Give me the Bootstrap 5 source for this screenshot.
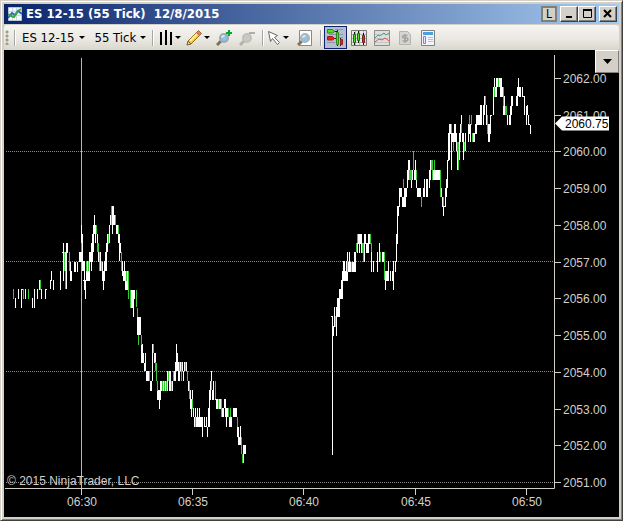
<!DOCTYPE html>
<html lang="en">
<head>
<meta charset="utf-8">
<meta name="viewport" content="width=device-width, initial-scale=1">
<title>ES 12-15 (55 Tick) 12/8/2015</title>
<link href="https://cdn.jsdelivr.net/npm/bootstrap@5.3.0/dist/css/bootstrap.min.css" rel="stylesheet">
<style>
body { background: #d4d0c8; font-family: "DejaVu Sans Condensed", "DejaVu Sans", sans-serif; }
.win { background: #d4d0c8; padding: 3px; border: 1px solid; border-color: #d4d0c8 #404040 #404040 #d4d0c8;
  box-shadow: inset 1px 1px #fff, inset -1px -1px #808080; }
.titlebar { height: 21px; background: linear-gradient(90deg, #0a246a, #a6caf0); padding: 0 2px 1px 4px; border-bottom: 1px solid #d4d0c8; }
.titlebar h1 { font-size: 13px; line-height: 20px; font-weight: 700; color: #fff; white-space: pre; margin-left: 4px; }
.capbtn { width: 18px; height: 16px; padding: 0; border: 1px solid; border-color: #fff #404040 #404040 #fff; background: #d4d0c8;
  box-shadow: inset -1px -1px #808080; line-height: 0; display: flex; justify-content: center; align-items: center; }
.capbtn.link-mark { width: 16px; border: 2px solid #808078; box-shadow: none; font-size: 12px; color: #000; }
.capgap { gap: 3px; }
.tools { min-height: 25px; background: linear-gradient(#f6f5f2, #e9e7e1 60%, #d9d6cc); border-radius: 3px; }
.tools-row { background: #d4d0c8; }
.grip { width: 10px; height: 15px; background: radial-gradient(circle at 3px 2px, #a09c90 1px, transparent 2px) 0 0/10px 4px; }
.rule { width: 2px; height: 16px; background: #a6a6a6; border-right: 1px solid #fff; }
.tool { height: 23px; width: 23px; padding: 0; border: 1px solid transparent; background: none; display: flex; align-items: center; justify-content: center; color: #000; }
.tool.menu { width: 29px; gap: 2px; }
.tool.text { width: auto; font-size: 13px; gap: 4px; padding: 0 4px 0 5px; white-space: nowrap; }
.tool.text.interval { padding-left: 3px; }
.tool.picked { border-color: #0a246a; background: #b6bdd2; margin-left: 2px; }
.plot { display: block; width: 100%; height: auto; }
.plot text { font-family: "Liberation Sans", Arial, sans-serif; font-size: 12px; fill: #d4d0c8; }
.plot .last { fill: #000; }
.drop { top: 0; right: 0; width: 24px; height: 23px; padding: 0; background: #d4d0c8; border: 1px solid; border-color: #fff #808080 #808080 #fff; display: flex; align-items: center; justify-content: center; }
</style>
</head>
<body>
<main class="win">
  <header class="titlebar d-flex align-items-center">
    <svg width="14" height="14" viewBox="0 0 14 14" aria-hidden="true"><path fill="#f4f8ff" stroke="#b8c4d8" d="M.5 .5h13v13H.5z"/><path stroke="#cbd5e4" d="M4.500 1v12M8.500 1v12M1 4.500h12M1 8.500h12"/><path fill="none" stroke="#2e62c0" stroke-width="2" d="M0 11l4-5 3 2 3-4 4 3"/><path fill="none" stroke="#39a83c" stroke-width="2" d="M0 7l3 2 3 1 4-6 3-2"/></svg>
    <h1 class="mb-0 flex-grow-1">ES 12-15 (55 Tick)  12/8/2015</h1>
    <div class="d-flex capgap">
      <button class="capbtn link-mark" type="button">L</button>
      <div class="d-flex">
        <button class="capbtn" type="button" aria-label="Minimize"><svg width="11" height="10"><path d="M2 7h6v2H2z"/></svg></button>
        <button class="capbtn" type="button" aria-label="Maximize"><svg width="11" height="10"><path fill="none" stroke="#000" d="M1.500 1v7.500h8V1"/><path d="M1 0h9v2H1z"/></svg></button>
      </div>
      <button class="capbtn" type="button" aria-label="Close"><svg width="10" height="9"><path stroke="#000" stroke-width="2" d="M1 1l7 7M8 1L1 8"/></svg></button>
    </div>
  </header>
  <div class="tools-row">
  <div class="tools d-flex align-items-center" role="toolbar" aria-label="Chart tools">
    <span class="grip"></span><span class="rule"></span>
    <button class="tool text" type="button">ES 12-15 <svg width="7" height="4"><path d="M0 0h6L3 3z"/></svg></button>
    <button class="tool text interval" type="button">55 Tick <svg width="7" height="4"><path d="M0 0h6L3 3z"/></svg></button>
    <span class="rule"></span>
    <button class="tool menu" type="button" aria-label="Bar style"><svg width="15" height="16"><path stroke="#000" stroke-width="2" d="M4 2v13M9 0v15M14 2v13"/></svg><svg width="7" height="4"><path d="M1 0h6L4 3z"/></svg></button>
    <button class="tool menu" type="button" aria-label="Draw"><svg width="16" height="16"><path fill="#f4c936" stroke="#96701b" d="M2 11L11 2l3 3-9 9z"/><path stroke="#fff09a" stroke-width="2" d="M4 11l7-7"/><path fill="#e9825c" stroke="#a65f42" d="M10.500 2.500l2-2 3 3-2 2z"/><path fill="#ead8b5" stroke="#705a3a" d="M2 11l3 3-4 1z"/></svg><svg width="6" height="4"><path d="M0 0h6L3 3z"/></svg></button>
    <button class="tool" type="button" aria-label="Zoom in"><svg width="16" height="16"><path stroke="#806f5c" stroke-width="3" d="M1 15l4-4"/><circle cx="8" cy="8" r="4" fill="#8dc2ea" stroke="#a1a7ae" stroke-width="2"/><path fill="#d7edfb" d="M5 7a3 3 0 013-2l1 1-3 2z"/><path stroke="#00a82c" stroke-width="2" d="M13 0v6M10 3h6"/></svg></button>
    <button class="tool" type="button" aria-label="Zoom out" disabled><svg width="16" height="16"><path stroke="#b5b2ad" stroke-width="3" d="M1 15l4-4"/><circle cx="8" cy="8" r="4" fill="#c9c9c7" stroke="#c0bfbb" stroke-width="2"/><path stroke="#b0aeaa" stroke-width="2" d="M10 3h6"/></svg></button>
    <span class="rule ms-1"></span>
    <button class="tool menu" type="button" aria-label="Pointer"><svg width="14" height="16"><path fill="#fff" stroke="#666" d="M1.500 1.500l2 10 2-3 5 6 2-2-5-5 3-2z"/></svg><svg width="7" height="4"><path d="M0 0h6L3 3z"/></svg></button>
    <button class="tool" type="button" aria-label="Zoom page"><svg width="16" height="16"><path fill="#fff" stroke="#898989" d="M2.500.5h12v15h-12z"/><path stroke="#85715e" stroke-width="3" d="M1 15l4-4"/><circle cx="8" cy="8" r="4" fill="#8fc2e6" stroke="#aeb3b8" stroke-width="2"/><path fill="#d7edfb" d="M5 7a3 3 0 013-2l1 1-3 2z"/></svg></button>
    <span class="rule ms-1"></span>
    <button class="tool picked" type="button" aria-label="Chart trader" aria-pressed="true"><svg width="17" height="17"><path stroke="#8e96ab" d="M8 .5h8M2 5.500h14M0 13.500h8M12 8.500h4"/><path stroke="#222" d="M6 2.500h5M6 9.500h5M10.500 1v16M13.500 9v8"/><path fill="#4be51b" stroke="#2a8a1a" d="M.5.500h5l2 2-2 1.500h-5zM9.500 3.500h2v12h-2z"/><path fill="#ef1b16" stroke="#9c2020" d="M.5 7.500h5l2 2-2 1.500h-5zM13.500 10.500h2v5h-2z"/></svg></button>
    <button class="tool" type="button" aria-label="Chart"><svg width="16" height="16"><path fill="#e8e8e8" stroke="#777" d="M.5.500h15v15H.5z"/><path stroke="#b8b8b8" d="M1 4.500h14M1 8.500h14M1 12.500h14M4.500 1v14M8.500 1v14M12.500 1v14"/><path stroke="#111" d="M3.500 2v13M7.500 1v12M12.500 3v12"/><path fill="#45d51f" stroke="#236b1b" d="M2.500 4.500h2v8h-2zM6.500 3.500h2v7h-2z"/><path fill="#e92720" stroke="#7c2020" d="M11.500 5.500h2v7h-2z"/></svg></button>
    <button class="tool" type="button" aria-label="Indicators"><svg width="16" height="16"><path fill="#dedede" stroke="#8c8c8c" d="M.5.500h15v15H.5z"/><path stroke="#c5c5c5" d="M1 4.500h14M1 8.500h14M1 12.500h14"/><path fill="none" stroke="#3aa781" d="M1 8l3-3 2 1 4-3 2 2 3-2"/><path fill="none" stroke="#d85650" d="M1 12l4-3 3 1 3-2 4 3"/></svg></button>
    <button class="tool" type="button" aria-label="Strategies" disabled><svg width="14" height="16"><path fill="#d6d5d2" stroke="#b4b3b0" d="M1.500 1.500h8l3 3v10h-11z"/><path fill="none" stroke="#a2a2a0" stroke-width="1.500" d="M9.500 5.500H6C4 5.500 4 8 6 8h2c2.500 0 2.500 3 0 3H4.500M7 4v9"/></svg></button>
    <button class="tool" type="button" aria-label="Properties"><svg width="14" height="16"><path fill="#f2f3fb" stroke="#818181" d="M.5.500h13v15H.5z"/><path fill="#4ba1db" d="M2 2h10v3H2z"/><path fill="#eee4ff" stroke="#9673dd" d="M2.500 6.500h2v7h-2z"/><path stroke="#b7c1d4" d="M7 7.500h5M7 9.500h5M7 11.500h5"/></svg></button>
  </div>
  </div>
  <section class="position-relative" aria-label="Price chart">
    <svg class="plot" viewBox="4 50 615 467" role="img" aria-label="ES 12-15, 55 tick bars">
      <path fill="#000" d="M4 50h615v467H4z"/>
      <path stroke="#8c8c8c" stroke-dasharray="1 1" d="M6 151.500h548M6 261.500h548M6 371.500h548M6 482.500h548"/>
      <path stroke="#d2b48c" d="M81.500 58v430"/>
      <g id="bars" shape-rendering="crispEdges"></g>
      <path fill="none" stroke="#d4d0c8" d="M5 488.500h549.500V55"/>
      <g id="labels"></g>
      <text x="7" y="485">© 2015 NinjaTrader, LLC</text>
      <path fill="#fff" d="M555 123.500l7-7h47v14h-47z"/>
      <text class="last" x="565" y="128">2060.75</text>
    </svg>
    <button class="drop position-absolute" type="button" aria-label="Chart menu"><svg width="9" height="5"><path d="M0 0h9L4.500 5z"/></svg></button>
  </section>
</main>
<script>
// Each bar: x, top, bottom, optional width
const up = `15 298 308|18 289 299|21 289 308|22 289 290|25 289 299|32 298 308|34 289 308|37 289 299|39 280 290|41 289 299|45 289 299 1|46 289 290|50 280 289|51 271 281|53 280 290|60 271 290|62 252 253|63 243 281|65 252 271|66 243 289|67 243 253|70 262 281|71 271 281|74 262 272 2|77 262 272|79 252 262 2|81 225 262|82 234 271|83 261 271 2|84 271 290|83 280 281|85 280 299|86 271 281 4|87 261 281|89 252 271|90 252 262|91 243 271|92 234 262|93 225 252|94 215 234|95 225 243|97 234 243|98 252 262|100 252 271|102 262 281|103 271 290|104 261 281|105 252 271|106 243 271|107 234 252|109 225 243|110 215 225|112 206 234|113 206 225|114 215 225|116 225 234 2|118 234 243 2|119 234 261|120 243 253|122 261 276|123 271 281 3|124 261 271|125 271 290 3|127 271 290
131 290 308 2|133 290 317|134 290 299|137 317 335 2|139 317 335 2|141 344 363 2|143 353 363|144 363 371|145 353 371|146 371 381 2|148 371 381|150 381 391 2|152 344 381|154 353 363|155 353 363|157 390 400 3|159 390 409|160 381 400|161 381 391|163 381 391|165 381 391|167 371 391|169 371 391 2|172 381 391|174 371 381|175 362 381|176 344 371|177 353 371|178 362 381|179 371 381|180 362 371|182 362 371|183 371 381|184 362 371|186 362 371|188 381 391|190 390 409|191 399 417|192 390 409|193 408 417|194 417 427|195 408 417|196 417 427 6|197 408 427|199 408 427|202 417 437|204 417 427|205 426 427|206 417 427|207 427 437|208 408 427|209 390 427|210 381 400|211 371 381|212 390 400|213 381 400|215 399 400|216 399 409 2|219 399 409 2|222 408 417 2|224 399 408|225 399 417|226 408 427|227 408 417|229 417 427 2|231 417 427|233 408 417 4|237 427 437|238 427 445|239 437 445|240 426 445|243 445 463|244 445 454 2
331 316 317|332 316 455|333 326 336|334 307 327|336 307 336|337 298 317 3|339 289 299 3|341 280 299 2|342 271 281 6|343 261 281 2|346 261 281|347 252 261|348 262 272 3|349 252 262|352 262 272 4|354 252 272|355 252 262|356 243 244|358 234 244 4|357 243 253|359 243 253|361 243 253|364 234 262|365 234 244|366 243 253 2|368 234 253|369 234 244|371 243 272|373 261 272|376 261 262|377 252 272|379 243 262|382 252 262 2|385 271 290|386 271 281 3|388 261 281|390 271 281|392 271 281|393 261 290|395 261 272|396 234 262|397 206 244|398 206 216|399 188 207|400 188 197 2|402 197 207 4|404 188 207|405 188 207|406 188 197|407 170 188|408 160 180|409 160 170|411 179 188|412 170 180|414 170 180|415 160 180|416 179 188|417 188 197 4|423 188 197|424 179 197|426 179 197 2|429 170 188|430 160 180|431 160 170|433 170 180 7|441 188 197|442 197 207|443 206 216|444 206 207|445 188 207|446 179 197|447 160 188|448 133 161|449 124 160|450 124 134|451 133 170|452 133 142 4|454 124 142 2|456 133 151|457 142 170|459 133 160|460 124 142|461 115 133|462 133 142|463 133 160|464 142 151|465 133 151|468 124 142|469 115 134|470 124 142|473 133 142 2|475 124 134 2|476 115 125 4|480 105 125 2|483 105 125|484 96 115|486 105 125|488 124 142|489 124 142|490 115 134|491 115 116|493 87 115|494 78 96|495 87 97|496 78 97|497 78 87|499 78 87|500 78 97 2|502 87 97|503 105 115|504 96 115|507 115 125|509 115 125|510 106 125|511 96 115|512 96 106|516 96 106|517 87 106|518 78 96|519 87 97 2|522 87 97|523 96 97|524 96 115|526 106 125|527 105 115|528 115 125|529 124 125|530 125 134`;
const down = `13 289 299|23 289 299|28 289 299|40 280 290|64 252 271|65 271 289|69 252 271|81 243 252|86 261 271|88 261 271|96 225 234|97 243 252|98 243 252|99 252 271|101 261 271|108 234 244|111 206 225|115 215 225|118 225 234|121 252 271|126 271 281|128 271 299
130 290 308|136 290 307|137 308 317|138 335 345|141 335 345|149 371 381|153 344 353|155 362 371|156 363 381|157 381 391|162 381 391|164 381 391|166 381 391|168 371 381|171 381 391|173 371 381|179 362 371|181 362 381|185 362 371|187 371 381|189 381 399|192 399 409|195 417 427|211 381 390|215 381 399|218 399 409|221 399 417|228 408 417|230 408 417|237 417 427|241 437 454|242 454 463
335 316 327|347 261 272|351 262 272|356 243 252|357 234 243|362 243 253|363 243 262|370 234 244|371 243 252|380 252 262|384 252 280|403 179 188|409 170 180 3|413 151 170|416 170 180|421 197 207|431 160 170|432 160 180|434 160 170|440 170 197|443 197 206|451 124 133|453 142 151|457 142 151|458 142 170|461 124 133|464 142 151|469 115 125|471 115 125|472 133 142|485 96 105|487 115 134|494 87 97|498 78 87|503 87 106|505 106 115 2`;
const ns = 'http://www.w3.org/2000/svg';
function add(parent, name, attrs, text) {
  const el = document.createElementNS(ns, name);
  for (const key in attrs) el.setAttribute(key, attrs[key]);
  if (text) el.textContent = text;
  document.getElementById(parent).append(el);
}
for (const [list, fill] of [[up, '#fff'], [down, '#32cd32']]) {
  const d = list.split(/[|\n]/).map(s => {
    const [x, top, bottom, w = 1] = s.split(' ').map(Number);
    return `M${x} ${top}h${w}V${bottom}h-${w}z`;
  }).join('');
  add('bars', 'path', { d, fill });
}
for (let price = 2062; price >= 2051; price--) {
  const y = Math.round(78 + (2062 - price) * 404 / 11);
  add('labels', 'path', { d: `M554 ${y + .5}h7`, stroke: '#d4d0c8' });
  add('labels', 'text', { x: 563, y: y + 5 }, price + '.00');
}
['06:30', '06:35', '06:40', '06:45', '06:50'].forEach((time, i) => {
  const x = Math.round(81 + i * 111.2);
  add('labels', 'path', { d: `M${x + .5} 488v7`, stroke: '#d4d0c8' });
  add('labels', 'text', { x: x + 1, y: 506, 'text-anchor': 'middle' }, time);
});
</script>
<script src="https://cdn.jsdelivr.net/npm/bootstrap@5.3.0/dist/js/bootstrap.bundle.min.js"></script>
</body>
</html>
